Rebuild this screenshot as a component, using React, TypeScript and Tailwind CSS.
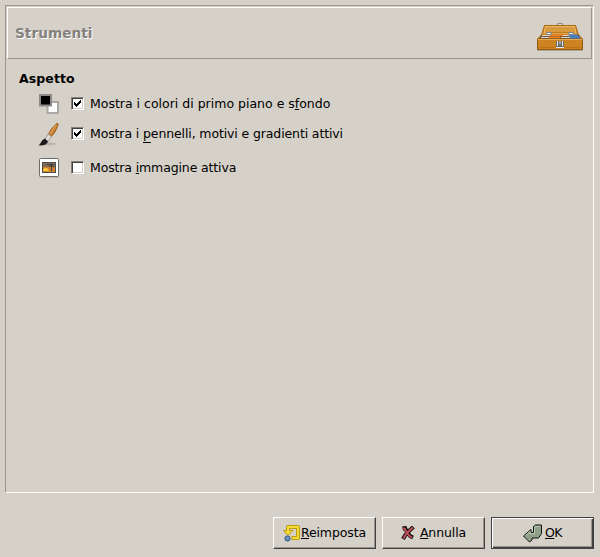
import type { ReactNode } from "react";

function Toolbox() {
  return (
    <svg width="48" height="32" viewBox="0 0 48 32" className="shrink-0">
      <path d="M21.500 4.500v-2h5v2" fill="#d3d7cf" stroke="#8d8f8a" />
      <path d="M8.500 4.500h31l3 9.500 4 4h-45l4-4z" fill="#cf8a2c" stroke="#a8670f" />
      <path d="M9.500 5.500h29l1.500 6.500H8z" fill="#d9993f" stroke="#eab763" />
      <path d="M10 11.500h28" stroke="#c07d1e" />
      <path d="M5 14h38l2 4H3z" fill="#7a5426" />
      <path d="M6 14.500h8M25 14.500h9M5 16.500h9M25 16.500h9" stroke="#d6d6d2" />
      <path d="M14 14.500h13M13 16.500h11" stroke="#f08020" strokeWidth="1.500" />
      <path d="M33 14.500h9M34 16.500h10" stroke="#4c7fc0" strokeWidth="2" />
      <path d="M10.500 11.500h5v2h-5zM32.500 11.500h5v2h-5z" fill="#e6e6e4" stroke="#80827d" />
      <path d="M1.500 18.500h45v10h-45z" fill="#cd8420" stroke="#95590c" />
      <path d="M2 18.500h44" stroke="#e9a94a" />
      <path d="M2 26.500h44" stroke="#bd7415" />
      <path d="M1 29.500h46" stroke="#aea89f" />
      <path d="M20 20h8v7h-8z" fill="#6b6c68" />
      <path d="M21.500 20v5M26.500 20v5M20 26.500h8M24 20v3" fill="none" stroke="#e8e8e6" />
    </svg>
  );
}

function Swatches() {
  return (
    <svg width="22" height="22" viewBox="0 0 22 22">
      <path d="M9.500 9h10.500v11H9.500z" fill="#fff" stroke="#aaa9a7" strokeWidth="2" />
      <path d="M2 2h11v10.500H2z" fill="#000" stroke="#8b8a88" strokeWidth="2" />
    </svg>
  );
}

function Brush() {
  return (
    <svg width="22" height="24" viewBox="0 0 22 24">
      <ellipse cx="11" cy="22" rx="7" ry="1.500" fill="#bab5ad" />
      <path d="M18.500 1.500c1.300-.5 2 .5 1.500 2l-3 6.500-4 5-3-2 3-5.500z" fill="#c9802f" stroke="#8a5314" strokeWidth=".8" />
      <path d="M18 3l-6 9" stroke="#e9ae68" />
      <path d="M10 12l3.500 2.500-3.500 5-3-2z" fill="#dededc" stroke="#858583" strokeWidth=".7" />
      <path d="M7 16.500l3 3c-1 3-5 4.500-9.500 3.700 2.500-1.200 2.500-5 6.500-6.700z" fill="#1c1c1c" />
    </svg>
  );
}

function Picture() {
  return (
    <svg width="22" height="22" viewBox="0 0 22 22">
      <path d="M1 20.500h20" stroke="#bbb6ae" />
      <rect x="1.500" y="1.500" width="19" height="18" rx="1" fill="#fff" stroke="#6a6a68" />
      <path d="M4 5h14v11H4z" fill="#4d4f4c" />
      <path d="M5 6h12v5H5z" fill="#806a55" />
      <path d="M5 10h12v5H5z" fill="#cf7f2e" />
      <path d="M5 14c0-4 5-4 6 0z" fill="#ffc83a" />
      <path d="M9 7.500h7M13.500 8v6M11 10l2-2 3 2" stroke="#3c3c38" fill="none" />
    </svg>
  );
}

function ResetIcon() {
  return (
    <svg width="18" height="18" viewBox="0 0 18 18">
      <path d="M8.500 14H15V3H5v4" fill="none" stroke="#bd9c08" strokeWidth="4" strokeLinejoin="round" />
      <path d="M.5 6.500h9.500l-5 5z" fill="#f4da3a" stroke="#bd9c08" />
      <path d="M9.500 14H15V3H5v5" fill="none" stroke="#f4da3a" strokeWidth="2" strokeLinejoin="round" />
      <circle cx="4.500" cy="14.500" r="2.600" fill="#6b8fbd" stroke="#2f5688" />
    </svg>
  );
}

function CancelIcon() {
  return (
    <svg width="14" height="14" viewBox="0 0 14 14">
      <path d="M1.500 2.500L4 2l2 4 3 4 3 1.500M12.500 1L9 4 5 8l-3 5" stroke="#161010" strokeWidth="4" fill="none" />
      <path d="M2 2.500h1.500l2 3.500 3 4 2.500 1.500M12 1.500L9 4 5 8l-2.500 4.500" stroke="#c0505a" strokeWidth="2" fill="none" />
    </svg>
  );
}

function OkIcon() {
  return (
    <svg width="20" height="19" viewBox="0 0 20 19">
      <path d="M10.500 2.500l2-1.500h6v8.500l-3 4.500H9v2l-2.500 2L.5 12 8 5.500V8.500h2.500z" fill="#91a188" stroke="#111" />
      <path d="M12 2.500h5M11.500 3v6.500H7V7.500l-4.500 4" fill="none" stroke="#bdcbb5" />
    </svg>
  );
}

function Row({ icon, checked = false, children }: { icon: ReactNode; checked?: boolean; children: ReactNode }) {
  return (
    <div className="flex h-[30px] items-center">
      <span className="flex w-[33px] shrink-0">{icon}</span>
      <span className="mb-px mr-[6px] flex size-[13px] items-center justify-center border border-b-white border-l-[#85817a] border-r-white border-t-[#85817a] bg-white shadow-[inset_1px_1px_#404040,inset_-1px_-1px_#d5d0c8]">
        {checked && (
          <svg width="7" height="7" viewBox="0 0 7 7" shapeRendering="crispEdges">
            <path d="M0 2h1v1h1v1h1V3h1V2h1V1h1V0h1v3H6v1H5v1H4v1H3v1H2V6H1V5H0z" fill="#000" />
          </svg>
        )}
      </span>
      <span className="whitespace-nowrap">{children}</span>
    </div>
  );
}

function Button({ icon, primary = false, children }: { icon: ReactNode; primary?: boolean; children: ReactNode }) {
  const edge = primary
    ? "border-[#404040] shadow-[inset_1px_1px_#fff,inset_-1px_-1px_#404040,inset_-2px_-2px_#9a948c]"
    : "border-b-[#404040] border-l-white border-r-[#404040] border-t-white shadow-[inset_-1px_-1px_#9a948c]";
  return (
    <button className={`flex h-8 w-[103px] items-center justify-center border tracking-[-0.1px] ${edge}`}>
      {icon}
      <span>{children}</span>
    </button>
  );
}

const line = "underline decoration-1 [text-decoration-skip-ink:none]";

export default function App() {
  return (
    <main className="flex h-[557px] w-[600px] flex-col bg-[#d5d0c8] pl-[5px] pr-[6px] pt-[5px] font-['DejaVu_Sans',sans-serif] text-[12.500px] leading-[16px] text-black">
      <section className="h-[488px] border border-b-white border-l-[#9a948c] border-r-white border-t-[#9a948c] p-px">
        <header className="flex h-[52px] items-center justify-between border border-b-[#9a948c] border-l-white border-r-[#9a948c] border-t-white pl-[7px] pr-[7px]">
          <h1 className="text-[13.700px] font-bold text-[#85817d] [text-shadow:1px_1px_#fff]">Strumenti</h1>
          <div className="pt-[8px]"><Toolbox /></div>
        </header>
        <div className="pl-[12px] pt-[12px]">
          <h2 className="font-bold tracking-[0.1px]">Aspetto</h2>
          <div className="pl-[19px] pt-[2px]">
            <Row icon={<Swatches />} checked>Mostra i colori di primo piano e s<span className={line}>f</span>ondo</Row>
            <div className="tracking-[-0.12px]"><Row icon={<Brush />} checked>Mostra i <span className={`${line} underline-offset-[4px]`}>p</span>ennelli, motivi e gradienti attivi</Row></div>
            <div className="pt-[4px] tracking-[-0.13px]"><Row icon={<Picture />}>Mostra <span className={line}>i</span>mmagine attiva</Row></div>
          </div>
        </div>
      </section>
      <footer className="mt-[24px] flex justify-end gap-[6px]">
        <Button icon={<ResetIcon />}><span className={line}>R</span>eimposta</Button>
        <Button icon={<span className="mr-[5px]"><CancelIcon /></span>}><span className={line}>A</span>nnulla</Button>
        <Button primary icon={<span className="mr-[2px]"><OkIcon /></span>}><span className="tracking-[-0.6px]"><span className={line}>O</span>K</span></Button>
      </footer>
    </main>
  );
}
